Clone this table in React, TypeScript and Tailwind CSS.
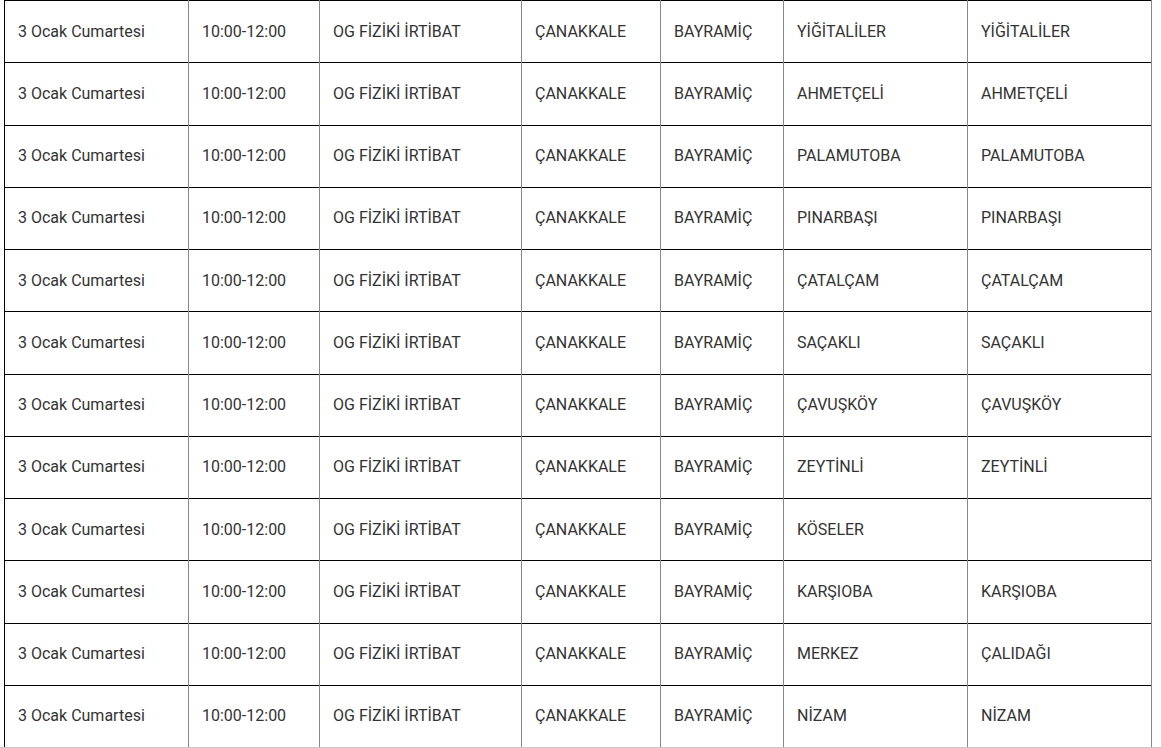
const rows: [string, string][] = [
  ["YİĞİTALİLER", "YİĞİTALİLER"],
  ["AHMETÇELİ", "AHMETÇELİ"],
  ["PALAMUTOBA", "PALAMUTOBA"],
  ["PINARBAŞI", "PINARBAŞI"],
  ["ÇATALÇAM", "ÇATALÇAM"],
  ["SAÇAKLI", "SAÇAKLI"],
  ["ÇAVUŞKÖY", "ÇAVUŞKÖY"],
  ["ZEYTİNLİ", "ZEYTİNLİ"],
  ["KÖSELER", ""],
  ["KARŞIOBA", "KARŞIOBA"],
  ["MERKEZ", "ÇALIDAĞI"],
  ["NİZAM", "NİZAM"],
];

const widths = ["w-[184px]", "w-[131px]", "w-[202px]", "w-[139px]", "w-[123px]", "w-[184px]", "w-[184px]"];

function App() {
  return (
    <div className="h-[748px] w-[1161px] overflow-hidden bg-white font-['Roboto',sans-serif] text-[16px] text-[#333]">
      <div className="h-[747px] overflow-hidden pl-[4px]">
        <table className="table-fixed border-collapse">
          <colgroup>
            {widths.map((w, i) => (
              <col key={i} className={w} />
            ))}
          </colgroup>
          <tbody>
            {rows.map(([a, b], i) => {
              const cells = ["3 Ocak Cumartesi", "10:00-12:00", "OG FİZİKİ İRTİBAT", "ÇANAKKALE", "BAYRAMİÇ", a, b];
              return (
                <tr key={i} className="h-[62.25px] border-t border-b border-black">
                  {cells.map((c, j) => (
                    <td
                      key={j}
                      className={
                        "border-x border-[#888] px-[13px] align-middle leading-5 " +
                        (j === 0 ? "border-l-black" : "")
                      }
                    >
                      {c}
                    </td>
                  ))}
                </tr>
              );
            })}
          </tbody>
        </table>
      </div>
      <div className="h-px w-full bg-[#c8c8c8]" />
    </div>
  );
}

export default App;
